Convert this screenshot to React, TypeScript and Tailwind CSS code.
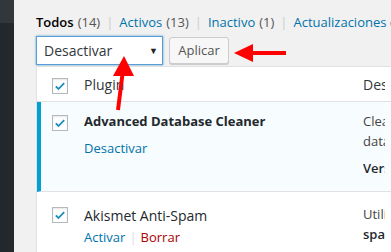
import React from "react";

const Check = () => (
    <span className="flex h-4 w-4 shrink-0 items-center justify-center border border-[#b4b9be] bg-white shadow-[inset_0_1px_2px_rgba(0,0,0,0.1)]">
        <svg viewBox="0 0 20 20" className="h-[14px] w-[14px]">
            <path
                d="M4 10.5l3.8 3.8L16 5.8"
                fill="none"
                stroke="#1e8cbe"
                strokeWidth="2.6"
            />
        </svg>
    </span>
);

const Arrows = () => (
    <svg
        className="pointer-events-none absolute left-0 top-0"
        width="391"
        height="252"
        viewBox="0 0 391 252"
    >
        <path d="M118 110 L122.5 74" stroke="#f00" strokeWidth="4" />
        <polygon points="124,56 113,76 134,76" fill="#f00" />
        <path d="M252 53 L286 53" stroke="#f00" strokeWidth="4" />
        <polygon points="234,53 253,44 253,62" fill="#f00" />
    </svg>
);

export default function App() {
    return (
        <div className="relative flex h-[252px] w-[391px] overflow-hidden bg-[#f1f1f1] font-['Open_Sans',sans-serif] text-[13px] text-[#444]">
            <div className="flex w-[14px] shrink-0 flex-col bg-[#23282d]">
                <div className="h-[23px] bg-[#32373c]" />
            </div>
            <div className="flex flex-1 flex-col pl-[22px]">
                <div className="flex h-[38px] items-center whitespace-nowrap pt-[10px] text-[#646970]">
                    <span className="font-semibold text-[#000]">Todos</span>
                    <span className="ml-1 text-[#555]">(14)</span>
                    <span className="mx-[6px] text-[#ccc]">|</span>
                    <span className="text-[#0073aa]">Activos</span>
                    <span className="ml-1 text-[#555]">(13)</span>
                    <span className="mx-[6px] text-[#ccc]">|</span>
                    <span className="text-[#0073aa]">Inactivo</span>
                    <span className="ml-1 text-[#555]">(1)</span>
                    <span className="mx-[6px] text-[#ccc]">|</span>
                    <span className="text-[#0073aa]">Actualizaciones disponibles</span>
                </div>
                <div className="flex h-[32px] items-start gap-[6px]">
                    <div className="flex h-[29px] w-[127px] items-center justify-between border border-[#5b9dd9] bg-white pl-[7px] pr-[4px] text-[14px] text-[#32373c] shadow-[0_0_2px_rgba(30,140,190,0.8)]">
                        <span>Desactivar</span>
                        <span className="text-[9px] text-[#222]">▼</span>
                    </div>
                    <div className="mt-[1px] flex h-[27px] w-[60px] items-center justify-center rounded-[3px] border border-[#ccc] bg-[#f7f7f7] text-[#555] shadow-[0_1px_0_#ccc]">
                        Aplicar
                    </div>
                </div>
                <div className="flex flex-col border-l border-t border-[#e1e1e1] bg-white">
                    <div className="flex h-[35px] items-center border-b border-[#e1e1e1]">
                        <div className="w-[47px] pl-[15px] pt-[3px]">
                            <Check />
                        </div>
                        <span className="w-[279px] text-[14px] text-[#32373c]">Plugin</span>
                        <span className="w-[22px] overflow-hidden whitespace-nowrap text-[14px] text-[#32373c]">Descripción</span>
                    </div>
                    <div className="flex h-[90px] border-b border-[#e1e1e1] border-l-4 border-l-[#00a0d2] bg-[#f7fcfe]">
                        <div className="w-[43px] pl-[11px] pt-[13px]">
                            <Check />
                        </div>
                        <div className="flex w-[279px] flex-col pt-[10px]">
                            <span className="text-[13px] font-bold text-[#23282d]">Advanced Database Cleaner</span>
                            <span className="mt-[7px] text-[#0073aa]">Desactivar</span>
                        </div>
                        <div className="flex w-[22px] flex-col overflow-hidden whitespace-nowrap pt-[10px] text-[13px]">
                            <span>Clean up your database</span>
                            <span className="leading-[19px]">database</span>
                            <span className="mt-[8px] font-semibold text-[#23282d]">Versión</span>
                        </div>
                    </div>
                    <div className="flex h-[60px]">
                        <div className="w-[47px] pl-[15px] pt-[15px]">
                            <Check />
                        </div>
                        <div className="flex w-[279px] flex-col pt-[13px]">
                            <span className="text-[14px] text-[#23282d]">Akismet Anti-Spam</span>
                            <span className="mt-[2px]">
                                <span className="text-[#0073aa]">Activar</span>
                                <span className="mx-[4px] text-[#ddd]">|</span>
                                <span className="text-[#a00]">Borrar</span>
                            </span>
                        </div>
                        <div className="flex w-[22px] flex-col overflow-hidden whitespace-nowrap pt-[13px] text-[13px]">
                            <span>Utilizado por millones</span>
                            <span className="font-semibold text-[#23282d]">spam</span>
                        </div>
                    </div>
                </div>
            </div>
            <Arrows />
        </div>
    );
}
